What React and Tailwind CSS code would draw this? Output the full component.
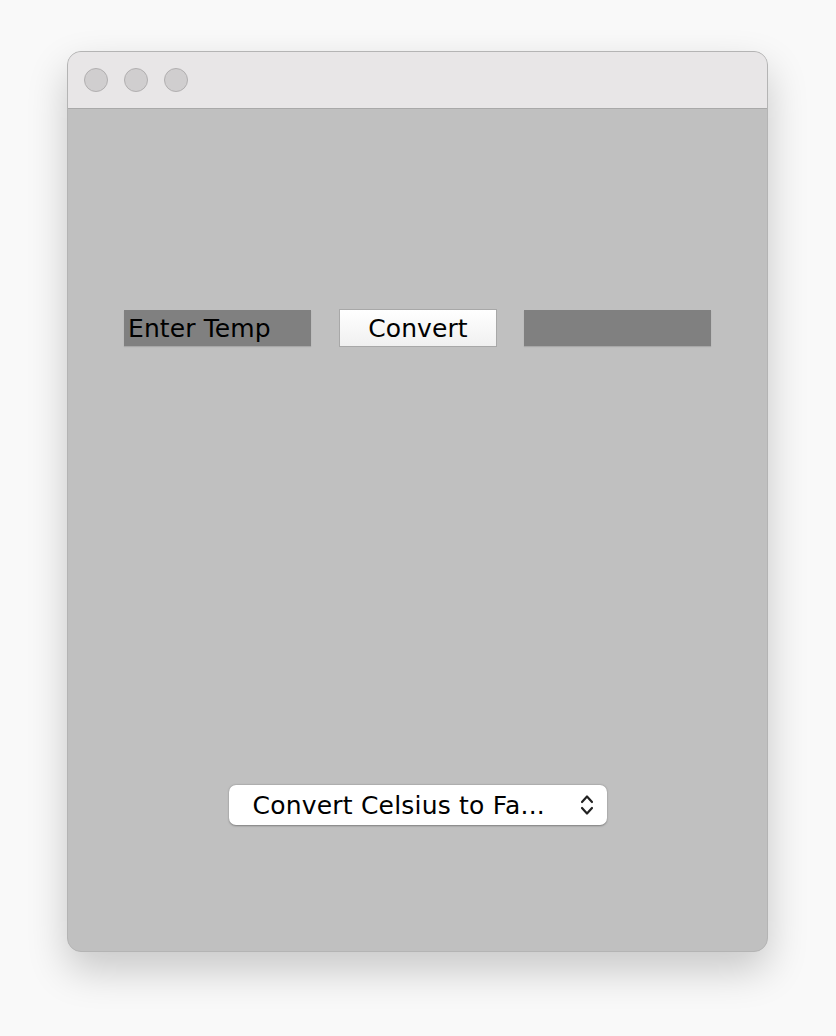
export default function App() {
  const font = { fontFamily: '"DejaVu Sans", "Liberation Sans", sans-serif' };
  return (
    <div className="w-[836px] h-[1036px] bg-[#f9f9f9] overflow-hidden pt-[51px] pl-[67px]" style={font}>
      <div className="w-[701px] h-[901px] rounded-[14px] border border-[#b4b4b4] bg-[#c0c0c0] overflow-hidden flex flex-col shadow-[0_18px_40px_rgba(0,0,0,0.2)]">
        <div className="h-[57px] bg-[#e8e6e7] border-b border-[#a9a9a9] flex items-center gap-[16px] pl-[16px] shrink-0">
          <div className="w-[24px] h-[24px] rounded-full bg-[#d0cecf] border border-[#b1afb0]" />
          <div className="w-[24px] h-[24px] rounded-full bg-[#d0cecf] border border-[#b1afb0]" />
          <div className="w-[24px] h-[24px] rounded-full bg-[#d0cecf] border border-[#b1afb0]" />
        </div>
        <div className="flex-1 flex flex-col items-center">
          <div className="mt-[200px] flex items-center">
            <div className="w-[187px] h-[36px] bg-[#808080] flex items-center pl-[4px] text-[25px] tracking-[0.1px] text-black leading-none shadow-[0_1px_1px_rgba(0,0,0,0.12)]">
              Enter Temp
            </div>
            <div className="ml-[28px] w-[158px] h-[38px] bg-gradient-to-b from-white to-[#f0f0f0] border border-[#a8a8a8] flex items-center justify-center text-[25px] tracking-[0.1px] text-black leading-none">
              Convert
            </div>
            <div className="ml-[27px] w-[187px] h-[36px] bg-[#808080] shadow-[0_1px_1px_rgba(0,0,0,0.12)]" />
          </div>
          <div className="mt-[438px] w-[378px] h-[40px] bg-white rounded-[7px] shadow-[0_0.5px_2px_rgba(0,0,0,0.35)] flex items-center pl-[24px] pr-[13px] text-[25px] tracking-[0.2px] text-black leading-none">
            <span className="flex-1">Convert Celsius to Fa...</span>
            <svg width="14" height="24" viewBox="0 0 14 24" fill="none" stroke="#222" strokeWidth="2.2" strokeLinecap="round" strokeLinejoin="round">
              <path d="M2 9 L7 3.5 L12 9" />
              <path d="M2 15 L7 20.5 L12 15" />
            </svg>
          </div>
        </div>
      </div>
    </div>
  );
}
